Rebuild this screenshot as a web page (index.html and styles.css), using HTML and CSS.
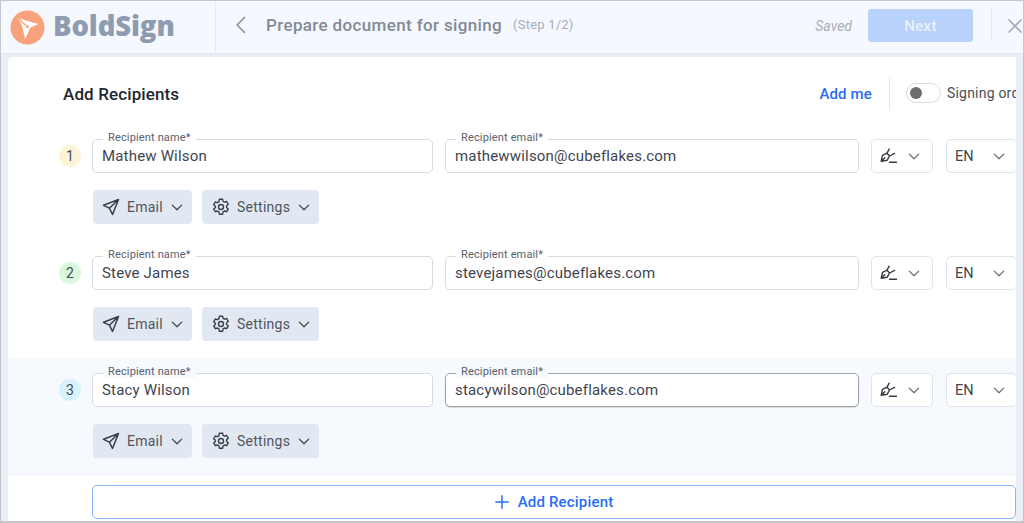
FILE: index.html
```html
<!DOCTYPE html>
<html lang="en">
<head>
<meta charset="utf-8">
<title>BoldSign</title>
<link rel="stylesheet" href="styles.css">
</head>
<body>
<svg class="defs" width="0" height="0" aria-hidden="true">
  <defs>
    <symbol id="chev" viewBox="0 0 14 8"><path d="M1.5 1.2 7 6.7l5.5-5.5" fill="none" stroke="currentColor" stroke-width="1.5" stroke-linecap="round" stroke-linejoin="round"/></symbol>
    <symbol id="send" viewBox="0 0 18 18"><path d="M16.5 1.5 1.5 7.3l5.9 2.9 3.1 6.3zM16.5 1.5 7.4 10.2" fill="none" stroke="currentColor" stroke-width="1.5" stroke-linejoin="round"/></symbol>
    <symbol id="gear" viewBox="0 0 18 18"><path d="M7.4 1.2h3.2l.5 2.2 1.4.8 2.2-.7 1.6 2.8-1.7 1.5v1.6l1.7 1.5-1.6 2.8-2.2-.7-1.4.8-.5 2.4H7.4l-.5-2.4-1.4-.8-2.2.7-1.6-2.8 1.7-1.5V8.3L1.7 6.8l1.6-2.8 2.2.7 1.4-.8z" fill="none" stroke="currentColor" stroke-width="1.4" stroke-linejoin="round"/><circle cx="9" cy="9" r="2.5" fill="none" stroke="currentColor" stroke-width="1.4"/></symbol>
    <symbol id="sign" viewBox="0 0 18 16"><path d="M1.2 13.2 2.5 7.4 7 5.2 9.6 8l-2.4 4.2zM1.2 13.2l3.6-3.5M7 5.2l2.2-4M9.6 8l5-2.6M9.5 14.2h7" fill="none" stroke="currentColor" stroke-width="1.4" stroke-linecap="round" stroke-linejoin="round"/></symbol>
  </defs>
</svg>
<div class="app">
  <header class="topbar">
    <div class="brand">
      <svg class="logo" viewBox="0 0 36 36" aria-hidden="true"><circle cx="18" cy="18" r="17.5" fill="#F7A27D"/><path d="M8.5 8.5 29 14.5l-8.2 3.8L15.5 30 12.6 16.6z" fill="#fff"/><path d="M9 9l8.8 8.3" stroke="#F7A27D" stroke-width="1.5"/><circle cx="18" cy="17.6" r="1.5" fill="#F7A27D"/></svg>
      <span class="brand-name">BoldSign</span>
    </div>
    <div class="heading">
      <svg class="back" viewBox="0 0 11 18" aria-hidden="true"><path d="M9.5 1.5 2 9l7.5 7.5" fill="none" stroke="currentColor" stroke-width="1.7" stroke-linecap="round" stroke-linejoin="round"/></svg>
      <span class="title">Prepare document for signing</span>
      <span class="step">(Step 1/2)</span>
    </div>
    <span class="saved">Saved</span>
    <button class="next">Next</button>
    <span class="bar-divider"></span>
    <svg class="close" viewBox="0 0 14 14" aria-hidden="true"><path d="M1 1l12 12M13 1 1 13" stroke="currentColor" stroke-width="1.7" stroke-linecap="round"/></svg>
  </header>

  <main class="card">
    <div class="card-head">
      <h1>Add Recipients</h1>
      <a class="add-me">Add me</a>
      <span class="head-divider"></span>
      <span class="toggle"><span class="knob"></span></span>
      <span class="order">Signing order</span>
    </div>

    <section class="row">
      <div class="fields">
        <span class="num num-1">1</span>
        <div class="field f-name"><label>Recipient name*</label><span>Mathew Wilson</span></div>
        <div class="field f-email"><label>Recipient email*</label><span>mathewwilson@cubeflakes.com</span></div>
        <div class="select s-sign"><svg class="sign"><use href="#sign"/></svg><svg class="chev"><use href="#chev"/></svg></div>
        <div class="select s-lang"><span>EN</span><svg class="chev"><use href="#chev"/></svg></div>
      </div>
      <div class="actions">
        <button class="act a-email"><svg class="i"><use href="#send"/></svg>Email<svg class="chev"><use href="#chev"/></svg></button>
        <button class="act a-set"><svg class="i"><use href="#gear"/></svg>Settings<svg class="chev"><use href="#chev"/></svg></button>
      </div>
    </section>

    <section class="row">
      <div class="fields">
        <span class="num num-2">2</span>
        <div class="field f-name"><label>Recipient name*</label><span>Steve James</span></div>
        <div class="field f-email"><label>Recipient email*</label><span>stevejames@cubeflakes.com</span></div>
        <div class="select s-sign"><svg class="sign"><use href="#sign"/></svg><svg class="chev"><use href="#chev"/></svg></div>
        <div class="select s-lang"><span>EN</span><svg class="chev"><use href="#chev"/></svg></div>
      </div>
      <div class="actions">
        <button class="act a-email"><svg class="i"><use href="#send"/></svg>Email<svg class="chev"><use href="#chev"/></svg></button>
        <button class="act a-set"><svg class="i"><use href="#gear"/></svg>Settings<svg class="chev"><use href="#chev"/></svg></button>
      </div>
    </section>

    <section class="row row-active">
      <div class="fields">
        <span class="num num-3">3</span>
        <div class="field f-name"><label>Recipient name*</label><span>Stacy Wilson</span></div>
        <div class="field f-email is-focus"><label>Recipient email*</label><span>stacywilson@cubeflakes.com</span></div>
        <div class="select s-sign"><svg class="sign"><use href="#sign"/></svg><svg class="chev"><use href="#chev"/></svg></div>
        <div class="select s-lang"><span>EN</span><svg class="chev"><use href="#chev"/></svg></div>
      </div>
      <div class="actions">
        <button class="act a-email"><svg class="i"><use href="#send"/></svg>Email<svg class="chev"><use href="#chev"/></svg></button>
        <button class="act a-set"><svg class="i"><use href="#gear"/></svg>Settings<svg class="chev"><use href="#chev"/></svg></button>
      </div>
    </section>

    <button class="add-recipient">
      <svg class="plus" viewBox="0 0 14 14" aria-hidden="true"><path d="M7 .8v12.4M.8 7h12.4" stroke="currentColor" stroke-width="1.5" stroke-linecap="round"/></svg>
      Add Recipient
    </button>
  </main>
</div>
</body>
</html>
```

FILE: styles.css
```css
* { box-sizing: border-box; }
html, body { margin: 0; height: 100%; overflow: hidden; }
body { font-family: Roboto, "Liberation Sans", sans-serif; color: #3f4550; }
.defs { position: absolute; }
button { font: inherit; border: 0; padding: 0; }

.app {
  width: 1024px;
  height: 523px;
  border: 1px solid #c4c6c9;
  border-bottom-width: 2px;
  background: #e9eef6;
  display: flex;
  flex-direction: column;
  overflow: hidden;
}

.topbar {
  height: 53px;
  flex: none;
  background: #f5f9ff;
  border-bottom: 1px solid #e3e8f0;
  display: flex;
  align-items: center;
}
.brand {
  width: 215px;
  height: 100%;
  flex: none;
  border-right: 1px solid #e6ebf3;
  display: flex;
  align-items: center;
  padding-left: 9px;
  gap: 8px;
}
.logo { width: 35px; height: 35px; flex: none; }
.brand-name {
  font-family: "Open Sans", sans-serif;
  font-weight: 800;
  font-size: 27.5px;
  letter-spacing: -.1px;
  line-height: 1;
  margin-top: -2px;
  color: #8f9bb0;
}
.heading {
  flex: 1;
  display: flex;
  align-items: center;
  padding-left: 19px;
  margin-top: -5px;
}
.back { width: 11px; height: 18px; color: #8d96a5; margin-right: 20px; }
.title { font-size: 17px; font-weight: 500; color: #828a96; letter-spacing: .36px; }
.step { font-size: 13px; color: #a6adb8; margin-left: 11px; letter-spacing: .2px; }
.saved { font-size: 14px; font-style: italic; color: #a8aeb6; margin-right: 16px; margin-top: -3px; }
.next {
  width: 105px;
  height: 33px;
  margin-top: -3px;
  border-radius: 3px;
  background: #b8d2fb;
  color: #e9f1fe;
  font-size: 15px;
  font-weight: 500;
  letter-spacing: .3px;
}
.bar-divider { width: 1px; height: 34px; margin: -4px 16px 0 18px; background: #e6ebf3; }
.close { width: 14px; height: 14px; flex: none; color: #a4abb6; margin: -3px 1px 0 0; }

.card {
  margin: 3px 0 0 7px;
  width: 1008px;
  flex: 1;
  min-height: 0;
  background: #fff;
  border-radius: 5px 0 0 0;
  overflow: hidden;
  display: flex;
  flex-direction: column;
}
.card-head {
  height: 68px;
  flex: none;
  display: flex;
  align-items: center;
  padding: 6px 0 0 55px;
  white-space: nowrap;
}
h1 { margin: 0; font-size: 17px; font-weight: 500; color: #23272e; letter-spacing: .12px; flex: 1; }
.add-me { font-size: 15px; font-weight: 500; color: #2a6df4; letter-spacing: .15px; }
.head-divider { width: 1px; height: 32px; margin: 0 16px 0 17px; background: #e5e7ea; }
.toggle {
  width: 35px;
  height: 20px;
  flex: none;
  margin-top: -3px;
  border: 1.5px solid #dcdcdc;
  border-radius: 10px;
  background: #fff;
  display: flex;
  align-items: center;
  padding-left: 3px;
}
.knob { width: 12px; height: 12px; border-radius: 50%; background: #6d6d6d; }
.order {
  width: 69px;
  flex: none;
  overflow: hidden;
  font-size: 14px;
  color: #4a4f58;
  margin: -3px 0 0 6px;
  letter-spacing: .2px;
}

.row {
  --row-bg: #fff;
  height: 117px;
  flex: none;
  padding: 14px 0 0 51px;
  background: var(--row-bg);
}
.row-active { --row-bg: #f6f9fd; }
.fields { display: flex; align-items: center; }
.num {
  width: 22px;
  height: 22px;
  flex: none;
  border-radius: 50%;
  margin-right: 11px;
  display: flex;
  align-items: center;
  justify-content: center;
  font-size: 14px;
  color: #454a52;
}
.num-1 { background: #fdf4d8; }
.num-2 { background: #d9f8dd; }
.num-3 { background: #d9f3fe; }

.field {
  position: relative;
  height: 34px;
  flex: none;
  background: #fff;
  border: 1px solid #d5dbe5;
  border-radius: 5px;
  display: flex;
  align-items: center;
  padding-left: 9px;
  font-size: 15px;
  letter-spacing: .18px;
  color: #3f4550;
}
.field label {
  position: absolute;
  left: 10px;
  top: -8px;
  padding: 0 5px;
  font-size: 11px;
  line-height: 12px;
  letter-spacing: .15px;
  color: #5a606b;
  background: var(--row-bg);
}
.f-name { width: 341px; margin-right: 12px; }
.f-email { width: 414px; margin-right: 12px; }
.is-focus { border-color: #9ea3aa; box-shadow: 0 1px 1px #d8dbe0; }

.select {
  height: 34px;
  flex: none;
  background: #fff;
  border: 1px solid #dfe4ec;
  border-radius: 5px;
  display: flex;
  align-items: center;
  color: #3f4550;
}
.s-sign { width: 62px; margin-right: 13px; padding-left: 8px; }
.s-lang { width: 71px; padding-left: 8px; font-size: 14.5px; }
.s-lang span { flex: 1; }
.sign { width: 18px; height: 16px; color: #353a42; flex: none; }
.select .chev { width: 12px; height: 7px; color: #6a707b; flex: none; }
.s-sign .chev { margin-left: 10px; }
.s-lang .chev { margin-right: 11px; }

.actions { display: flex; gap: 10px; margin: 17px 0 0 34px; }
.act {
  height: 34px;
  display: flex;
  align-items: center;
  border-radius: 4px;
  background: #e2e8f1;
  color: #4f5560;
  font-size: 14px;
  letter-spacing: .25px;
  padding-right: 9px;
}
.a-email { width: 99px; padding-left: 9px; }
.a-set { width: 117px; padding-left: 10px; }
.i { width: 18px; height: 18px; color: #3a3f48; margin-right: 7px; flex: none; }
.act .chev { width: 12px; height: 7px; color: #3f4550; margin-left: auto; flex: none; }

.add-recipient {
  margin: 9px 0 0 84px;
  width: 924px;
  height: 34px;
  flex: none;
  background: #fff;
  border: 1px solid #8bb4f8;
  border-radius: 5px;
  color: #2a6df4;
  font-size: 15px;
  font-weight: 500;
  letter-spacing: .18px;
  display: flex;
  align-items: center;
  justify-content: center;
  gap: 9px;
}
.plus { width: 14px; height: 14px; flex: none; }
```
